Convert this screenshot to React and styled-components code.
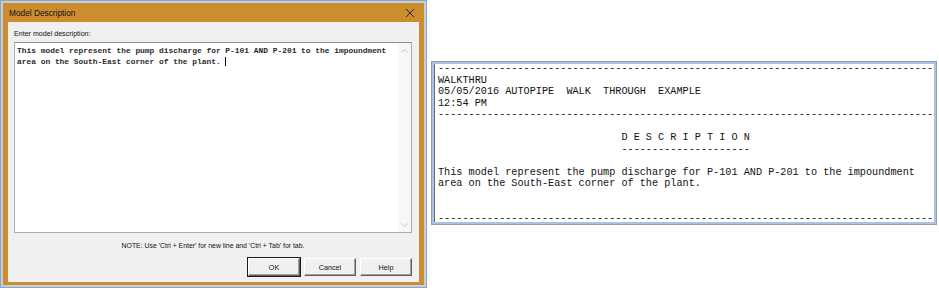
import React from 'react';
import styled, { createGlobalStyle } from 'styled-components';

const GlobalStyle = createGlobalStyle`
  html, body {
    margin: 0;
    padding: 0;
    background: #ffffff;
  }
`;

const DESCRIPTION_TEXT = [
  'This model represent the pump discharge for P-101 AND P-201 to the impoundment',
  'area on the South-East corner of the plant.',
];

const DASHES = '-'.repeat(81);

const REPORT_LINES = [
  DASHES,
  'WALKTHRU',
  '05/05/2016 AUTOPIPE  WALK  THROUGH  EXAMPLE',
  '12:54 PM',
  DASHES,
  '',
  `${' '.repeat(30)}D E S C R I P T I O N`,
  `${' '.repeat(30)}${'-'.repeat(21)}`,
  '',
  ...DESCRIPTION_TEXT,
  '',
  '',
  DASHES,
];

const App = () => (
  <Page>
    <GlobalStyle />
    <Window>
      <Frame>
        <TitleBar>
          <Title>Model Description</Title>
          <CloseButton aria-label="Close">
            <svg width="10" height="10" viewBox="0 0 10 10">
              <path d="M1 1 L9 9 M9 1 L1 9" stroke="#2b2b2b" strokeWidth="1" fill="none" />
            </svg>
          </CloseButton>
        </TitleBar>
        <Body>
          <Label>Enter model description:</Label>
          <Edit>
            <EditText>
              {DESCRIPTION_TEXT[0]}
              {'\n'}
              {DESCRIPTION_TEXT[1]}
              {' '}
              <Caret />
            </EditText>
            <ScrollTrack>
              <Chevron viewBox="0 0 7 4" $flip={false}>
                <path d="M0.5 3.5 L3.5 0.5 L6.5 3.5" stroke="#c2c2c2" fill="none" />
              </Chevron>
              <Chevron viewBox="0 0 7 4" $flip>
                <path d="M0.5 3.5 L3.5 0.5 L6.5 3.5" stroke="#c2c2c2" fill="none" />
              </Chevron>
            </ScrollTrack>
          </Edit>
          <Note>NOTE: Use 'Ctrl + Enter' for new line and 'Ctrl + Tab' for tab.</Note>
          <ButtonRow>
            <PushButton $default>OK</PushButton>
            <PushButton>Cancel</PushButton>
            <PushButton>Help</PushButton>
          </ButtonRow>
        </Body>
      </Frame>
    </Window>

    <Report>
      <ReportView>
        <ReportText>{REPORT_LINES.join('\n')}</ReportText>
      </ReportView>
    </Report>
  </Page>
);

const Page = styled.div`
  display: flex;
  align-items: flex-start;
  width: 939px;
  height: 288px;
  overflow: hidden;
`;

const Window = styled.div`
  box-sizing: border-box;
  width: 427px;
  height: 288px;
  flex-shrink: 0;
  border: 1px solid #9aa3ad;
  padding: 2px;
  background: #bcd0e6;
  display: flex;
`;
const Frame = styled.div`
  flex: 1;
  display: flex;
  flex-direction: column;
  background: #cd8d2f;
  padding: 0 5px 3px 5px;
`;
const TitleBar = styled.div`
  height: 19px;
  display: flex;
  align-items: center;
  justify-content: space-between;
`;
const Title = styled.span`
  font-family: "Liberation Sans", Arial, sans-serif;
  font-size: 8.3px;
  color: #111;
  padding-left: 1px;
`;
const CloseButton = styled.span`
  display: flex;
  width: 14px;
  justify-content: center;
  margin-right: 2px;
`;
const Body = styled.div`
  flex: 1;
  background: #f0f0f0;
  display: flex;
  flex-direction: column;
  padding: 7px 7px 6px 6px;
`;
const Label = styled.div`
  font-family: "Liberation Sans", Arial, sans-serif;
  font-size: 7.1px;
  line-height: 10px;
  color: #111;
`;
const Edit = styled.div`
  margin-top: 3px;
  box-sizing: border-box;
  height: 191px;
  background: #ffffff;
  border: 1px solid #abadb3;
  border-top-color: #8c8e92;
  display: flex;
`;
const EditText = styled.pre`
  flex: 1;
  margin: 0;
  padding: 3px 0 0 2px;
  font-family: "Liberation Mono", "Courier New", monospace;
  font-size: 7.9px;
  line-height: 10.6px;
  font-weight: bold;
  color: #2a2a2a;
  white-space: pre;
`;
const Caret = styled.span`
  display: inline-block;
  width: 0;
  height: 9px;
  border-left: 1px solid #000;
  vertical-align: -2px;
`;
const ScrollTrack = styled.div`
  width: 13px;
  background: #f7f7f7;
  display: flex;
  flex-direction: column;
  justify-content: space-between;
  align-items: center;
  padding: 6px 0 5px;
`;
const Chevron = styled.svg`
  width: 7px;
  height: 4px;
  transform: ${({ $flip }) => ($flip ? 'scaleY(-1)' : 'none')};
`;
const Note = styled.div`
  margin-top: 8px;
  text-align: center;
  font-family: "Liberation Sans", Arial, sans-serif;
  font-size: 6.9px;
  line-height: 10px;
  color: #111;
`;
const ButtonRow = styled.div`
  margin-top: 7px;
  display: flex;
  justify-content: flex-end;
  gap: 4px;
`;
const PushButton = styled.div`
  box-sizing: border-box;
  width: 52px;
  height: 18px;
  display: flex;
  align-items: center;
  justify-content: center;
  font-family: "Liberation Sans", Arial, sans-serif;
  font-size: 7.2px;
  color: #111;
  background: #f0f0f0;
  border: 1px solid;
  border-color: #ffffff #5f5f5f #5f5f5f #ffffff;
  box-shadow: ${({ $default }) => ($default
    ? '0 0 0 1px #1c1c1c, inset -1px -1px 0 #a0a0a0'
    : 'inset -1px -1px 0 #a0a0a0')};
`;

const Report = styled.div`
  box-sizing: border-box;
  margin: 61px 0 0 4px;
  width: 506px;
  height: 164px;
  flex-shrink: 0;
  border: 1px solid #9c9c9c;
  padding: 2px;
  background: #a8c4e5;
  display: flex;
`;
const ReportView = styled.div`
  flex: 1;
  background: #ffffff;
  border-left: 1px solid #6b6b6b;
  overflow: hidden;
`;
const ReportText = styled.pre`
  margin: -1px 0 0 0;
  padding-left: 3px;
  font-family: "Liberation Mono", "Courier New", monospace;
  font-size: 10.2px;
  line-height: 11.5px;
  color: #111;
  white-space: pre;
`;

export default App;
